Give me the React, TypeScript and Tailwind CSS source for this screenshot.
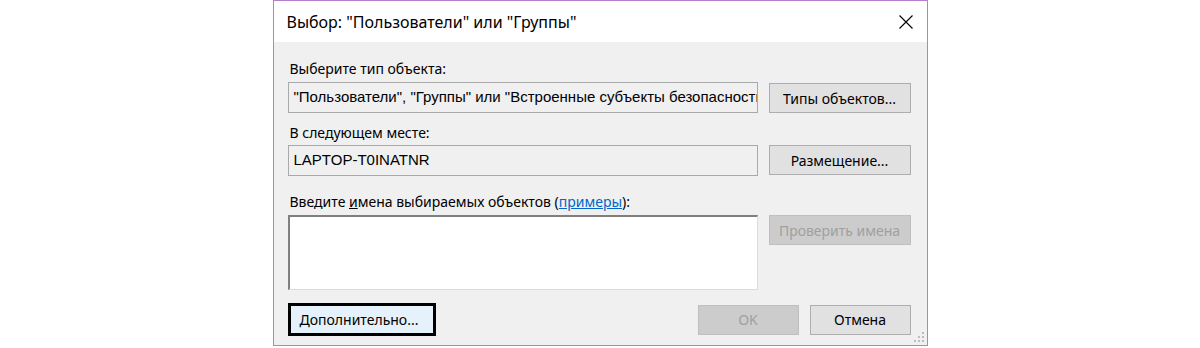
function CloseIcon() {
  return (
    <svg width="16" height="16" viewBox="0 0 16 16" className="shrink-0">
      <path d="M1.5 1.5 L14.5 14.5 M14.5 1.5 L1.5 14.5" stroke="#000" strokeWidth="1.1" fill="none" />
    </svg>
  );
}

function Grip() {
  return (
    <svg width="10" height="10" viewBox="0 0 10 10" className="absolute right-[3px] bottom-[3px]">
      <rect x="8" y="0" width="2" height="2" fill="#bdbdbd" />
      <rect x="4" y="4" width="2" height="2" fill="#bdbdbd" />
      <rect x="8" y="4" width="2" height="2" fill="#bdbdbd" />
      <rect x="0" y="8" width="2" height="2" fill="#bdbdbd" />
      <rect x="4" y="8" width="2" height="2" fill="#bdbdbd" />
      <rect x="8" y="8" width="2" height="2" fill="#bdbdbd" />
    </svg>
  );
}

function Button({ label, disabled, className = "" }: { label: string; disabled?: boolean; className?: string }) {
  return (
    <div
      className={
        "h-[30px] flex items-center justify-center border whitespace-nowrap " +
        (disabled ? "bg-[#cccccc] border-[#bfbfbf] text-[#a0a0a0] " : "bg-[#e1e1e1] border-[#adadad] text-black ") +
        className
      }
    >
      {label}
    </div>
  );
}

function ReadOnlyField({ value }: { value: string }) {
  return (
    <div className="h-[31px] w-[470px] border border-[#a9a9a9] bg-[#f0f0f0] flex items-center pl-[5px] overflow-hidden whitespace-nowrap font-['Liberation_Sans',sans-serif] text-[15px]">
      {value}
    </div>
  );
}

export default function App() {
  return (
    <div className="w-full h-[348px] bg-white flex justify-center font-['Noto_Sans',sans-serif] text-[14px] text-black">
      <div className="relative w-[655px] h-[346px] border border-[#b77ec9] flex flex-col">
        <div className="h-[41px] bg-white flex items-center justify-between pl-[13px] pr-[13px] shrink-0">
          <span className="text-[16px]">Выбор: "Пользователи" или "Группы"</span>
          <CloseIcon />
        </div>

        <div className="flex-1 bg-[#f0f0f0] pl-[14px] pr-[16px] pt-[16px] flex flex-col">
          <div className="h-[20px] flex items-center pl-[2px]">Выберите тип объекта:</div>
          <div className="mt-[4px] flex gap-[11px] items-start">
            <ReadOnlyField value={'"Пользователи", "Группы" или "Встроенные субъекты безопасности"'} />
            <Button label="Типы объектов..." className="w-[142px] mt-[1px]" />
          </div>

          <div className="mt-[9px] h-[20px] flex items-center pl-[2px]">В следующем месте:</div>
          <div className="mt-[3px] flex gap-[11px] items-start">
            <ReadOnlyField value="LAPTOP-T0INATNR" />
            <Button label="Размещение..." className="w-[142px]" />
          </div>

          <div className="mt-[15px] h-[20px] flex items-center pl-[2px] whitespace-nowrap">
            Введите&nbsp;<span className="underline">и</span>мена выбираемых объектов (
            <span className="text-[#0066cc] underline">примеры</span>):
          </div>
          <div className="mt-[4px] flex gap-[11px] items-start">
            <div className="h-[75px] w-[470px] bg-white border-t-2 border-l-2 border-r border-b border-t-[#7f7f7f] border-l-[#7f7f7f] border-r-[#dcdcdc] border-b-[#dcdcdc]" />
            <Button label="Проверить имена" disabled className="w-[142px]" />
          </div>

          <div className="mt-[13px] flex items-center">
            <div className="h-[33px] w-[148px] border-[3px] border-black bg-[#e5f1fb] flex items-center pl-[9px] whitespace-nowrap">
              Дополнительно...
            </div>
            <div className="ml-auto flex gap-[11px]">
              <Button label="OK" disabled className="w-[101px]" />
              <Button label="Отмена" className="w-[101px]" />
            </div>
          </div>
        </div>
        <Grip />
      </div>
    </div>
  );
}
